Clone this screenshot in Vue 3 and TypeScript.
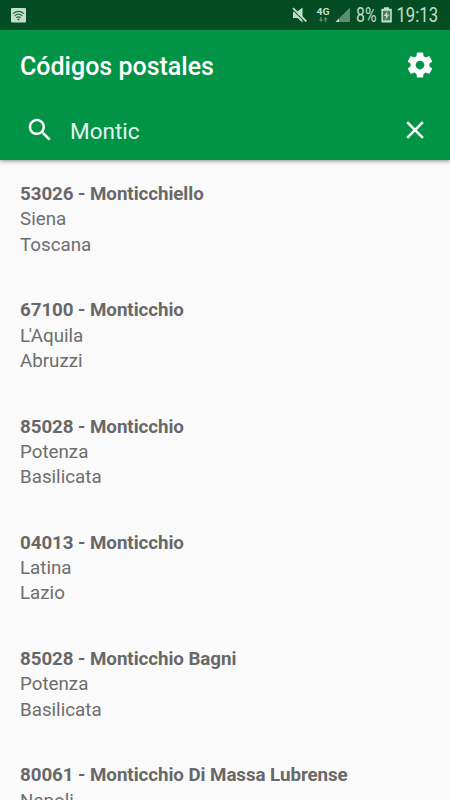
<script setup lang="ts">
interface PostalCode {
  code: string
  town: string
  province: string
  region: string
}

const query = 'Montic'

const results: PostalCode[] = [
  { code: '53026', town: 'Monticchiello', province: 'Siena', region: 'Toscana' },
  { code: '67100', town: 'Monticchio', province: "L'Aquila", region: 'Abruzzi' },
  { code: '85028', town: 'Monticchio', province: 'Potenza', region: 'Basilicata' },
  { code: '04013', town: 'Monticchio', province: 'Latina', region: 'Lazio' },
  { code: '85028', town: 'Monticchio Bagni', province: 'Potenza', region: 'Basilicata' },
  { code: '80061', town: 'Monticchio Di Massa Lubrense', province: 'Napoli', region: 'Campania' },
]
</script>

<template>
  <div class="screen">
    <div class="status">
      <svg class="wifi" width="15" height="15" viewBox="0 0 15 15">
        <rect width="15" height="14.5" rx="1" fill="#c2dfcc" />
        <g fill="none" stroke="#25663f" stroke-width="1.2">
          <path d="M2 5.6Q7.5 1.2 13 5.6" />
          <path d="M3.8 7.8Q7.5 4.6 11.2 7.8" />
          <path d="M5.4 9.8Q7.5 8 9.6 9.8" />
        </g>
        <path d="M6 10.8h3l-1.5 2z" fill="#25663f" />
      </svg>
      <svg class="indicators" width="170" height="30" viewBox="280 0 170 30">
        <g fill="#c2dfcc">
          <path d="M293 11.5h4.5l5-4v15l-5-4.5h-4.5z" />
          <path d="M293 9.8l13.8 13.4" stroke="#044d22" stroke-width="1.6" />
          <path d="M293 8.2l13.3 13.2" stroke="#c2dfcc" stroke-width="1.8" />
          <text x="316.5" y="15" font-size="9.5" font-weight="700" textLength="13" lengthAdjust="spacingAndGlyphs">4G</text>
          <path d="M320.3 17v2.6h-1.5l2.2 2.4 2.2-2.4h-1.5V17zM324.8 22v-2.6h-1.5l2.2-2.4 2.2 2.4h-1.5V22z" opacity=".45" />
          <path d="M350 7.5V22h-14.5z" opacity=".45" />
          <path d="M339 18.5V22h-3.5z" />
          <text x="356" y="22.3" font-size="19.5" textLength="20.5" lengthAdjust="spacingAndGlyphs">8%</text>
          <path d="M384 7.2h5v1.6h2.8V22.6h-10.4V8.8h2.6z" />
          <path d="M383 10.8h7.2v9.6H383z" fill="#47795a" />
          <path d="M387.6 11l-3.8 5h2.3l-.8 4 4-5.2h-2.4z" />
          <text x="396.5" y="22.3" font-size="19.5" textLength="41.5" lengthAdjust="spacingAndGlyphs">19:13</text>
        </g>
      </svg>
    </div>

    <header class="bar">
      <div class="title-row">
        <h1>Códigos postales</h1>
        <svg class="icon gear" width="30" height="30" viewBox="0 0 24 24">
          <path d="M19.43 12.98c.04-.32.07-.64.07-.98s-.03-.66-.07-.98l2.11-1.65c.19-.15.24-.42.12-.64l-2-3.46c-.12-.22-.39-.3-.61-.22l-2.49 1c-.52-.4-1.08-.73-1.69-.98l-.38-2.65C14.46 2.18 14.25 2 14 2h-4c-.25 0-.46.18-.49.42l-.38 2.65c-.61.25-1.17.59-1.69.98l-2.49-1c-.23-.09-.49 0-.61.22l-2 3.46c-.13.22-.07.49.12.64l2.11 1.65c-.04.32-.07.65-.07.98s.03.66.07.98l-2.11 1.65c-.19.15-.24.42-.12.64l2 3.46c.12.22.39.3.61.22l2.49-1c.52.4 1.08.73 1.69.98l.38 2.65c.03.24.24.42.49.42h4c.25 0 .46-.18.49-.42l.38-2.65c.61-.25 1.17-.59 1.69-.98l2.49 1c.23.09.49 0 .61-.22l2-3.46c.12-.22.07-.49-.12-.64l-2.11-1.65zM12 15.5c-1.93 0-3.5-1.57-3.5-3.5s1.57-3.5 3.5-3.5 3.5 1.57 3.5 3.5-1.57 3.5-3.5 3.5z" />
        </svg>
      </div>
      <div class="search-row">
        <svg class="icon" width="30" height="30" viewBox="0 0 24 24">
          <path d="M15.5 14h-.79l-.28-.27C15.41 12.59 16 11.11 16 9.5 16 5.91 13.09 3 9.5 3S3 5.91 3 9.5 5.91 16 9.5 16c1.61 0 3.09-.59 4.23-1.57l.27.28v.79l5 4.99L20.49 19l-4.99-5zm-6 0C7.01 14 5 11.99 5 9.5S7.01 5 9.5 5 14 7.01 14 9.5 11.99 14 9.5 14z" />
        </svg>
        <span class="query">{{ query }}</span>
        <svg class="icon" width="30" height="30" viewBox="0 0 24 24">
          <path d="M19 6.41L17.59 5 12 10.59 6.41 5 5 6.41 10.59 12 5 17.59 6.41 19 12 13.41 17.59 19 19 17.59 13.41 12z" />
        </svg>
      </div>
    </header>

    <ul class="list">
      <li v-for="(r, i) in results" :key="i">
        <strong>{{ r.code }} - {{ r.town }}</strong>
        <span :class="{ elided: r.province.includes('\'') }">{{ r.province }}</span>
        <span>{{ r.region }}</span>
      </li>
    </ul>
  </div>
</template>

<style scoped>
.screen {
  display: flex;
  flex-direction: column;
  height: 800px;
  overflow: hidden;
  background: #fafafa;
  font-family: Roboto, sans-serif;
}
.status {
  display: flex;
  flex: none;
  align-items: center;
  justify-content: space-between;
  height: 30px;
  padding-left: 11px;
  background: #044d22;
}
.bar {
  position: relative;
  flex: none;
  height: 130px;
  background: #019447;
  color: #fff;
  box-shadow: 0 1px 4px rgba(0, 0, 0, 0.45);
  clip-path: inset(0 0 -8px 0);
}
.title-row {
  display: flex;
  align-items: center;
  justify-content: space-between;
  height: 70px;
  padding: 0 15px 0 20px;
}
h1 {
  margin: 4px 0 0;
  font-size: 25px;
  font-weight: 500;
  line-height: 30px;
}
.icon {
  flex: none;
  fill: #fff;
}
.search-row {
  display: flex;
  align-items: center;
  height: 60px;
  padding: 0 20px 0 25px;
}
.query {
  flex: 1;
  margin: 2px 0 0 15px;
  font-size: 22.5px;
  line-height: 28px;
  color: #e6f5ec;
}
.list {
  margin: 0;
  padding: 22px 20px 0;
  list-style: none;
}
li {
  display: flex;
  flex-direction: column;
  height: 116.25px;
  font-size: 18.75px;
  line-height: 25.3px;
  color: #6e6e6e;
  white-space: nowrap;
}
strong {
  font-weight: 700;
  letter-spacing: -0.06px;
  color: #686868;
}
/* Tightens the capital and apostrophe, a pair the font does not kern. */
.elided::first-letter {
  letter-spacing: -1.3px;
}
</style>

<style>
body {
  margin: 0;
  overflow: hidden;
}
</style>
